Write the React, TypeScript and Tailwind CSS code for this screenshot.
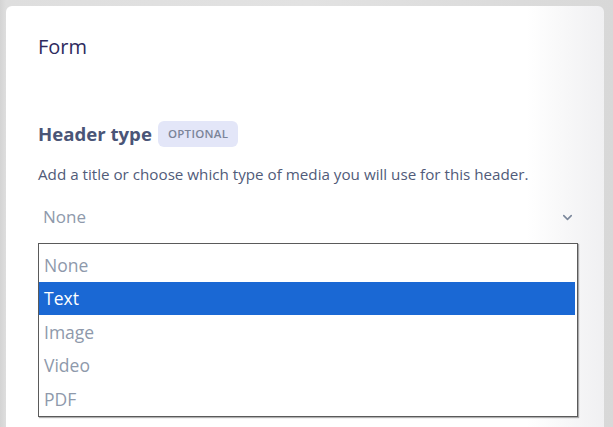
import { ChevronDown } from 'lucide-react';

const options = ['None', 'Text', 'Image', 'Video', 'PDF'];

const HeaderTypeField: React.FC<{ selected: string }> = ({ selected }) => {
  return (
    <div className="flex flex-col">
      <div className="flex flex-row items-center gap-[6px] h-[26px]">
        <h3 className="text-[18.6px] font-bold text-[#4a5577] leading-none">Header type</h3>
        <span className="h-[26px] px-[10px] flex items-center rounded-md bg-[#e3e6f8] text-[11.5px] font-semibold tracking-[0.3px] text-[#7b8499]">
          OPTIONAL
        </span>
      </div>
      <p className="mt-[17px] text-[15.2px] leading-[20px] text-[#515b79]">
        Add a title or choose which type of media you will use for this header.
      </p>
      <div className="mt-[20px] h-[26px] pl-[5px] pr-[29px] flex flex-row items-center justify-between">
        <span className="text-[17px] text-[#8e99ab]">None</span>
        <ChevronDown size={15} strokeWidth={2.5} className="text-[#7b879b]" />
      </div>
      <ul className="mt-[13px] w-[540px] border border-[#5a5a5a] bg-white shadow-[1px_1px_1px_rgba(0,0,0,0.3)] pt-[4px] pr-[2px]">
        {options.map((o) => (
          <li
            key={o}
            className={
              o === selected
                ? 'h-[33.5px] pl-[5px] flex items-center text-[17.5px] bg-[#1a68d4] text-white'
                : 'h-[33.5px] pl-[5px] flex items-center text-[17.5px] text-[#8e99ab]'
            }
          >
            {o}
          </li>
        ))}
      </ul>
    </div>
  );
};

export default function App() {
  return (
    <div
      className="h-[427px] w-[613px] overflow-hidden bg-[linear-gradient(to_right,#d4d4d4_0px,#dedede_6px,#e2e2e2_50%,#d8d8d8_100%)] pt-[6px] pl-[6px] pr-[9px]"
      style={{ fontFamily: '"Open Sans", "Noto Sans", sans-serif' }}
    >
      <div className="h-[460px] rounded-md bg-[linear-gradient(to_right,#ffffff_0%,#ffffff_87%,#f0f0f2_100%)] pl-[32px] pt-[28px]">
        <h2 className="text-[20px] leading-[26px] text-[#2e2b5e]">Form</h2>
        <div className="mt-[61px]">
          <HeaderTypeField selected="Text" />
        </div>
      </div>
    </div>
  );
}
